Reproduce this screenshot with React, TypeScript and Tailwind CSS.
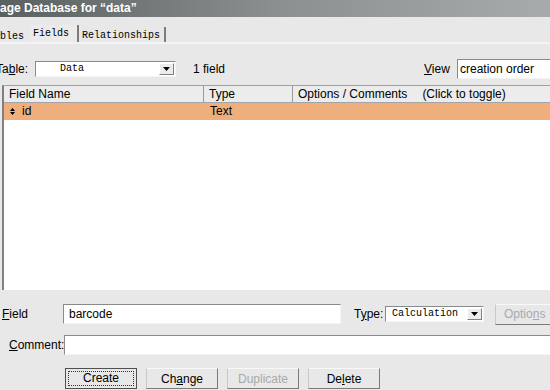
import React from "react";

const sans = { fontFamily: '"Liberation Sans", Arial, sans-serif' };
const mono = { fontFamily: '"Liberation Mono", "DejaVu Sans Mono", monospace' };

function DropBtn() {
  return (
    <div className="w-[15px] h-[12px] bg-[#ececec] border border-t-white border-l-white border-b-[#808080] border-r-[#808080] flex items-center justify-center shrink-0">
      <svg width="7" height="4" viewBox="0 0 7 4">
        <path d="M0 0 L7 0 L3.5 4 Z" fill="#000" />
      </svg>
    </div>
  );
}

function Select({ w, text, textMl }: { w: string; text: string; textMl: string }) {
  return (
    <div className={`${w} h-[16px] bg-white border border-t-[#8a8a8a] border-l-[#8a8a8a] border-b-[#f4f4f4] border-r-[#f4f4f4] flex items-center shrink-0`}>
      <span className={`${textMl} text-[10px] leading-[14px] flex-1`} style={mono}>
        {text}
      </span>
      <div className="mr-[1px]">
        <DropBtn />
      </div>
    </div>
  );
}

function Btn({
  children,
  disabled,
  def,
}: {
  children: React.ReactNode;
  disabled?: boolean;
  def?: boolean;
}) {
  return (
    <div
      className={`w-[72px] h-[21px] shrink-0 bg-[#e8e8e8] flex items-center justify-center text-[12px] ${
        def
          ? "border border-[#505050]"
          : "border border-t-[#f8f8f8] border-l-[#c8c8c8] border-b-[#7a7a7a] border-r-[#7a7a7a]"
      } ${disabled ? "text-[#a8a8a8]" : "text-black"}`}
    >
      {def ? (
        <div className="w-[66px] h-[15px] border border-dotted border-[#303030] flex items-center justify-center leading-[13px]">
          {children}
        </div>
      ) : (
        children
      )}
    </div>
  );
}

export default function App() {
  return (
    <div className="w-[550px] h-[390px] overflow-hidden bg-[#e8e8e8] text-black text-[12px]" style={sans}>
      {/* title bar */}
      <div className="h-[17px] bg-gradient-to-r from-[#5a6060] via-[#8a9090] to-[#a6acac] text-white font-bold text-[12px] leading-[17px] whitespace-nowrap pl-0">
        age Database for “data”
      </div>

      {/* tabs */}
      <div className="h-[25px] flex items-start text-[10px] whitespace-nowrap" style={mono}>
        <div className="w-[30px] mt-[11px] h-[14px] leading-[18px]">bles</div>
        <div className="w-[49px] mt-[8px] h-[17px] leading-[18px] pl-[3px] border-r-2 border-[#7c7c7c] bg-[#ebebeb]">
          Fields
        </div>
        <div className="w-[87px] mt-[10px] h-[15px] leading-[18px] pl-[3px] border-r-2 border-[#7c7c7c]">
          Relationships
        </div>
      </div>
      <div className="h-[2px] bg-[#f3f3f3]" />

      {/* table row */}
      <div className="mt-[15px] h-[20px] flex items-center whitespace-nowrap">
        <div className="w-[39px] ml-[-4px] shrink-0">
          Ta<span className="underline">b</span>le:
        </div>
        <Select w="w-[141px]" text="Data" textMl="ml-[24px]" />
        <div className="ml-[17px] w-[231px] shrink-0">1 field</div>
        <div className="w-[33px] shrink-0">
          <span className="underline">V</span>iew
        </div>
        <div className="w-[100px] h-[20px] shrink-0 bg-white border border-t-[#8a8a8a] border-l-[#8a8a8a] border-b-[#f4f4f4] border-r-[#f4f4f4] pl-[2px] leading-[18px]">
          creation order
        </div>
      </div>

      {/* list */}
      <div className="mt-[6px] ml-[2px] w-[560px] h-[205px] bg-white border-l-2 border-l-[#808080] border-t border-t-[#a0a0a0] whitespace-nowrap">
        <div className="h-[17px] bg-[#ececec] border-b border-[#a4a4a4] flex items-center leading-[17px]">
          <div className="w-[200px] h-full pl-[5px] border-r border-[#999999] shrink-0">Field Name</div>
          <div className="w-[89px] h-full pl-[5px] border-r border-[#999999] shrink-0">Type</div>
          <div className="h-full pl-[5px]">
            Options / Comments<span className="ml-[15px]">(Click to toggle)</span>
          </div>
        </div>
        <div className="h-[17px] bg-[#eeaf7c] flex items-center leading-[17px]">
          <div className="w-[201px] shrink-0 flex items-center pl-[6px]">
            <svg width="5" height="7" viewBox="0 0 5 7">
              <path d="M2.5 0 L5 3 L0 3 Z M0 4 L5 4 L2.5 7 Z" fill="#000" />
            </svg>
            <span className="ml-[7px]">id</span>
          </div>
          <div className="pl-[5px]">Text</div>
        </div>
      </div>

      {/* field row */}
      <div className="mt-[14px] h-[20px] flex items-center whitespace-nowrap">
        <div className="ml-[2px] w-[61px] shrink-0">
          <span className="underline">F</span>ield
        </div>
        <div className="w-[278px] h-[20px] shrink-0 bg-white border border-t-[#8a8a8a] border-l-[#8a8a8a] border-b-[#f4f4f4] border-r-[#f4f4f4] pl-[5px] leading-[18px]">
          barcode
        </div>
        <div className="ml-[13px] w-[31px] shrink-0">
          T<span className="underline">y</span>pe:
        </div>
        <Select w="w-[99px]" text="Calculation" textMl="ml-[6px]" />
        <div className="ml-[11px] w-[60px] h-[21px] shrink-0 bg-[#e8e8e8] border border-t-[#f8f8f8] border-l-[#c8c8c8] border-b-[#7a7a7a] border-r-[#7a7a7a] text-[#a8a8a8] pl-[8px] leading-[19px]">
          Optio<span className="underline">n</span>s
        </div>
      </div>

      {/* comment row */}
      <div className="mt-[11px] h-[20px] flex items-center whitespace-nowrap">
        <div className="ml-[9px] w-[55px] shrink-0">
          <span className="underline">C</span>omment:
        </div>
        <div className="w-[490px] h-[20px] shrink-0 bg-white border border-t-[#8a8a8a] border-l-[#8a8a8a] border-b-[#f4f4f4] border-r-[#f4f4f4]" />
      </div>

      {/* buttons */}
      <div className="mt-[13px] ml-[65px] flex gap-[9px] whitespace-nowrap">
        <Btn def>Create</Btn>
        <Btn>
          Ch<span className="underline">a</span>nge
        </Btn>
        <Btn disabled>Duplicate</Btn>
        <Btn>
          De<span className="underline">l</span>ete
        </Btn>
      </div>
    </div>
  );
}
